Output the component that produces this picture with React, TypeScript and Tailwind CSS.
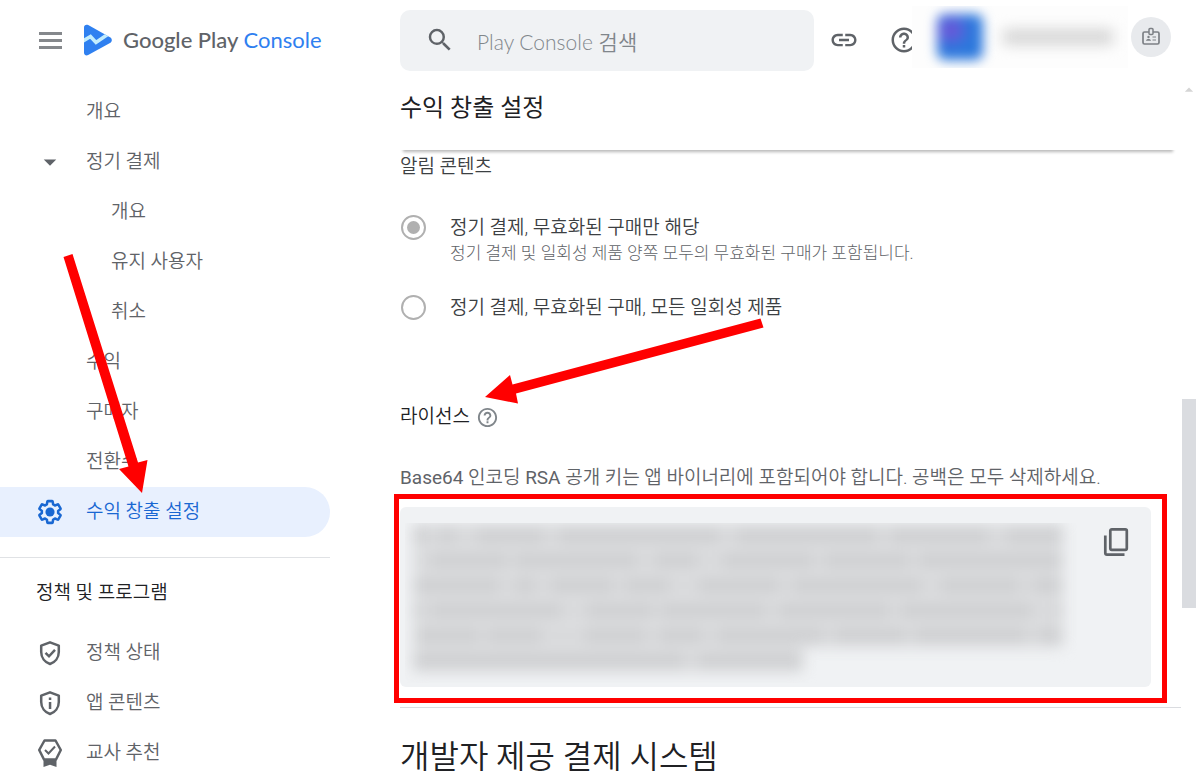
import React, { useState } from 'react';
import { MdSearch, MdLink, MdHelpOutline, MdArrowDropDown } from 'react-icons/md';

type IconProps = { className?: string };

const PlayLogo: React.FC<IconProps> = ({ className }) => (
  <svg viewBox="0 0 30 32" className={className} aria-hidden="true">
    <clipPath id="play-shape">
      <path d="M1 3.2C1 1 3.2 0 5.2 1.1L27 13.3c2.4 1.4 2.4 4.4 0 5.8L5.2 31C3.2 32 1 31 1 28.8z" />
    </clipPath>
    <g clipPath="url(#play-shape)">
      <path d="M0 0h30v32H0z" fill="#2f80f0" />
      <path d="M0 17l7.500-4.500 5.500 6L26 9.500" fill="none" stroke="#c3edfd" strokeWidth="3.600" />
    </g>
  </svg>
);

const GearIcon: React.FC<IconProps> = ({ className }) => (
  <svg viewBox="0 0 24 24" className={className} aria-hidden="true">
    <g transform="translate(12 12) scale(.87) translate(-12 -12)">
      <path
        d="M19.43 12.98c.04-.32.07-.64.07-.98s-.03-.66-.07-.98l2.110-1.650c.19-.15.24-.42.12-.64l-2-3.460a.5.5 0 0 0-.61-.22l-2.490 1c-.52-.4-1.080-.73-1.690-.98l-.38-2.650A.488.488 0 0 0 14 2h-4c-.25 0-.46.18-.49.42l-.38 2.650c-.61.25-1.170.59-1.690.98l-2.490-1a.5.5 0 0 0-.61.22l-2 3.460c-.13.22-.07.49.12.64l2.110 1.650c-.04.32-.07.65-.07.98s.03.66.07.98l-2.110 1.650c-.19.15-.24.42-.12.64l2 3.460a.5.5 0 0 0 .61.22l2.490-1c.52.4 1.080.73 1.690.98l.38 2.650c.03.24.24.42.49.42h4c.25 0 .46-.18.49-.42l.38-2.650c.61-.25 1.170-.59 1.690-.98l2.490 1a.5.5 0 0 0 .61-.22l2-3.460c.12-.22.07-.49-.12-.64z"
        fill="none"
        stroke="currentColor"
        strokeWidth="2.300"
        strokeLinejoin="round"
      />
      <circle cx="12" cy="12" r="4.200" fill="currentColor" />
    </g>
  </svg>
);

const Shield = (
  <path
    d="M15 4.300L23.800 7.600V14c0 5.600-3.700 10.200-8.800 12-5.100-1.800-8.800-6.400-8.800-12V7.600z"
    fill="none"
    stroke="currentColor"
    strokeWidth="2.500"
    strokeLinejoin="round"
  />
);

const ShieldCheckIcon: React.FC<IconProps> = ({ className }) => (
  <svg viewBox="0 0 30 30" className={className} aria-hidden="true">
    {Shield}
    <path d="M10.500 14.800l3.500 3.500 6-6.500" fill="none" stroke="currentColor" strokeWidth="2.500" />
  </svg>
);

const ShieldInfoIcon: React.FC<IconProps> = ({ className }) => (
  <svg viewBox="0 0 30 30" className={className} aria-hidden="true">
    {Shield}
    <path d="M13.800 9.500h2.500V12h-2.500zM13.800 14h2.500v7h-2.500z" fill="currentColor" />
  </svg>
);

const RibbonIcon: React.FC<IconProps> = ({ className }) => (
  <svg viewBox="0 0 30 30" className={className} aria-hidden="true">
    <path
      d="M9.500 2.500h11L25.800 12 21 21.500H9L4.200 12z"
      fill="none"
      stroke="currentColor"
      strokeWidth="2.500"
      strokeLinejoin="round"
    />
    <path d="M8.500 21h13v8L15 26.800 8.500 29z" fill="currentColor" />
    <path d="M10 12l3.500 3.500L20 8.500" fill="none" stroke="currentColor" strokeWidth="2" />
  </svg>
);

const BadgeIcon: React.FC<IconProps> = ({ className }) => (
  <svg viewBox="0 0 20 20" className={className} fill="none" stroke="currentColor" aria-hidden="true">
    <path d="M8 5H3.500A1.500 1.500 0 0 0 2 6.500v9A1.500 1.500 0 0 0 3.500 17h13a1.500 1.500 0 0 0 1.500-1.500v-9A1.500 1.500 0 0 0 16.500 5H12" strokeWidth="1.700" />
    <rect x="8" y="1.500" width="4" height="6" rx="1" strokeWidth="1.500" />
    <path d="M11.500 10H15M11.500 13H15" strokeWidth="1.200" />
    <path d="M5 13.800h5c0-1.300-1.300-1.800-2.500-1.800S5 12.500 5 13.800z" fill="currentColor" stroke="none" />
    <circle cx="7.500" cy="10" r="1.200" fill="currentColor" stroke="none" />
  </svg>
);

const CopyIcon: React.FC<IconProps> = ({ className }) => (
  <svg viewBox="0 0 26 30" className={className} fill="none" stroke="currentColor" aria-hidden="true">
    <rect x="7.300" y="2.300" width="16.500" height="20.500" rx="1.500" strokeWidth="2.700" />
    <path d="M2.300 8.500V26a1.700 1.700 0 0 0 1.700 1.700h17.500" strokeWidth="2.700" />
  </svg>
);

const mainItems = [
  { label: '개요', nested: false },
  { label: '정기 결제', nested: false, expanded: true },
  { label: '개요', nested: true },
  { label: '유지 사용자', nested: true },
  { label: '취소', nested: true },
  { label: '수익', nested: false },
  { label: '구매자', nested: false },
  { label: '전환수', nested: false },
  { label: '수익 창출 설정', nested: false, active: true },
];

const policyItems = [
  { label: '정책 상태', Icon: ShieldCheckIcon },
  { label: '앱 콘텐츠', Icon: ShieldInfoIcon },
  { label: '교사 추천', Icon: RibbonIcon },
];

const options = [
  {
    id: 'voided',
    label: '정기 결제, 무효화된 구매만 해당',
    help: '정기 결제 및 일회성 제품 양쪽 모두의 무효화된 구매가 포함됩니다.',
  },
  { id: 'all', label: '정기 결제, 무효화된 구매, 모든 일회성 제품' },
];

// Word widths of the redacted key, one array per line; negative values are gaps
const keyLines = [
  [14, -12, 16, -22, 66, -16, 160, -18, 140, -14, 96, -20, 56],
  [-18, 76, -8, 122, -18, 42, -26, 90, -12, 84, -10, 144],
  [86, -16, 20, -16, 62, -12, 44, -30, 80, -14, 128, -20, 78, -14, 30],
  [8, -10, 130, -26, 66, -8, 104, -14, 110, -12, 130, -26, 6],
  [-4, 62, -8, 54, -44, 60, -14, 44, -14, 106, -12, 70, -10, 110, -14, 24],
  [270, -16, 104],
];

const TopBar = () => (
  <header className="flex h-20 items-center">
    <div className="flex w-[400px] shrink-0 items-center pl-[35px]">
      <button type="button" aria-label="메뉴" className="flex h-[30px] w-[30px] items-center justify-center">
        <span className="flex w-[23px] flex-col gap-1">
          <span className="h-[3px] bg-[#85888c]" />
          <span className="h-[3px] bg-[#85888c]" />
          <span className="h-[3px] bg-[#85888c]" />
        </span>
      </button>
      <a href="#" className="ml-[18px] flex items-center gap-2.5 whitespace-nowrap font-['Lato','Noto_Sans_CJK_KR',sans-serif] text-[22px] leading-8">
        <PlayLogo className="h-8 w-[30px]" />
        <span className="font-medium text-[#5f6368]">
          Google Play <span className="font-normal text-[#2f80f0]">Console</span>
        </span>
      </a>
    </div>
    <label className="flex h-[61px] w-[414px] items-center rounded-[10px] bg-[#f0f2f4] pl-[25px]">
      <MdSearch className="h-[30px] w-[30px] shrink-0 text-[#5f6368]" />
      <input
        type="search"
        aria-label="Play Console 검색"
        placeholder="Play Console 검색"
        className="ml-[22px] min-w-0 flex-1 bg-transparent pt-1 font-['Lato','Noto_Sans_CJK_KR',sans-serif] text-[21px] font-[350] outline-none placeholder:text-[#80868b]"
      />
    </label>
    <button type="button" aria-label="링크 복사" className="ml-[15px] text-[#5f6368]">
      <MdLink className="h-[30px] w-[30px]" />
    </button>
    <button type="button" aria-label="도움말" className="ml-[30px] text-[#5f6368]">
      <MdHelpOutline className="h-[30px] w-[30px]" />
    </button>
    <button
      type="button"
      aria-label="계정"
      className="relative -ml-[7px] mb-1.5 flex h-[62px] w-[216px] items-center overflow-hidden bg-[#fdfdfd] pl-[25px]"
    >
      <span className="h-[46px] w-[46px] shrink-0 rounded-lg bg-radial-[at_30%_35%] from-[#7b4fd8] to-[#2c78dc] to-45% blur-[6px]" />
      <span className="ml-5 h-4 w-[110px] bg-[#d6d6d6] blur-[7px]" />
    </button>
    <button
      type="button"
      aria-label="개발자 프로필"
      className="mb-1.5 ml-[3px] flex h-10 w-10 shrink-0 items-center justify-center rounded-full bg-[#e8eaed] text-[#7c8085]"
    >
      <BadgeIcon className="h-5 w-5" />
    </button>
  </header>
);

const Sidebar = () => (
  <nav className="w-[330px] shrink-0 pt-[7px] text-[19px] font-[350] text-[#5f6368]">
    <ul>
      {mainItems.map((item, index) => (
        <li key={index}>
          <a
            href="#"
            aria-current={item.active ? 'page' : undefined}
            className={`flex h-[50px] items-center ${
              item.active ? 'rounded-r-full bg-[#e8f0fe] text-[#1967d2]' : ''
            }`}
          >
            <span className="flex w-[86px] justify-center pl-3.5">
              {item.expanded && <MdArrowDropDown className="h-[30px] w-[30px]" />}
              {item.active && <GearIcon className="h-[30px] w-[30px]" />}
            </span>
            <span className={item.nested ? 'pl-[25px]' : ''}>{item.label}</span>
          </a>
        </li>
      ))}
    </ul>
    <h2 className="mt-5 border-t border-[#e0e2e5] pb-5 pl-9 pt-5 text-[19px] font-[350] leading-[30px] text-[#202124]">
      정책 및 프로그램
    </h2>
    <ul>
      {policyItems.map(({ label, Icon }) => (
        <li key={label}>
          <a href="#" className="flex h-[50px] items-center">
            <span className="flex w-[86px] justify-center pl-3.5">
              <Icon className="h-[30px] w-[30px]" />
            </span>
            <span>{label}</span>
          </a>
        </li>
      ))}
    </ul>
  </nav>
);

const LicenseKey = () => (
  <div className="relative mr-[30px] mt-3.5 flex h-[180px] items-start justify-between rounded-md bg-[#f0f2f4] pl-[5px] pr-[22px] pt-4">
    <div aria-hidden="true" className="h-[160px] w-[680px] overflow-hidden">
      <div className="flex flex-col items-start pl-2 blur-[7px]">
        {keyLines.map((line, row) => (
          <div key={row} className="flex h-[25px] bg-[#dfe0e2] py-1">
            {line.map((w, i) => (
              <span key={i} className={w > 0 ? 'bg-[#cfd0d2]' : 'bg-[#d8d9db]'} style={{ width: Math.abs(w) }} />
            ))}
          </div>
        ))}
      </div>
    </div>
    <button type="button" aria-label="라이선스 키 복사" className="mt-1 text-[#5f6368]">
      <CopyIcon className="h-[30px] w-[26px]" />
    </button>
    <div className="pointer-events-none absolute -bottom-4 -left-1.5 -right-4 -top-[13px] border-[5px] border-[#ff0000]" />
  </div>
);

const Settings = () => {
  const [selected, setSelected] = useState('voided');

  return (
    <main className="ml-[70px] min-w-0 flex-1">
      <h1 className="mr-[5px] h-[70px] pt-2 text-2xl leading-10 text-[#202124] shadow-[0_5px_3px_-3px_rgba(0,0,0,0.28)]">
        수익 창출 설정
      </h1>

      <fieldset className="pt-0.5">
        <legend className="pt-0.5 text-[19px] font-[350] leading-[30px] text-[#3c4043]">알림 콘텐츠</legend>
        <div className="mt-[30px] flex flex-col gap-[30px]">
          {options.map((option) => (
            <label key={option.id} className="flex items-start">
              <input
                type="radio"
                name="notifications"
                checked={selected === option.id}
                onChange={() => setSelected(option.id)}
                className="ml-px mt-px h-[25px] w-[25px] shrink-0 appearance-none rounded-full border-2 border-[#b0b0b0] bg-clip-content p-1 checked:bg-[#b0b0b0]"
              />
              <span className="ml-6 flex flex-col">
                <span className="text-[19px] font-[350] leading-7 text-[#3c4043]">{option.label}</span>
                {option.help && <span className="text-[17px] font-light leading-[22px] text-[#5f6368]">{option.help}</span>}
              </span>
            </label>
          ))}
        </div>
      </fieldset>

      <section className="mt-20">
        <h2 className="flex items-center gap-1.5 text-[19px] font-[350] leading-[30px] text-[#202124]">
          라이선스
          <MdHelpOutline className="h-[23px] w-[23px] text-[#80868b]" />
        </h2>
        <p className="mt-[31px] whitespace-nowrap text-[19px] font-[350] leading-[30px] text-[#5f6368]">
          <span className="font-normal">Base64</span> 인코딩 <span className="font-normal">RSA</span> 공개 키는 앱
          바이너리에 포함되어야 합니다. 공백은 모두 삭제하세요.
        </p>
        <LicenseKey />
      </section>

      <h2 className="mt-5 border-t border-[#dadce0] pt-[25px] text-[32px] font-[350] leading-[48px] text-[#202124]">
        개발자 제공 결제 시스템
      </h2>
    </main>
  );
};

// Red pointers drawn over the page
const Arrows = () => (
  <svg
    width="800"
    height="520"
    viewBox="0 0 800 520"
    className="pointer-events-none absolute left-0 top-0"
    fill="#ff0000"
    aria-hidden="true"
  >
    <path d="M63.500 257l9-3 65.500 208.500 9.500-2.500-5.500 33-23-24 9.500-2.500z" />
    <path d="M760.500 318.500l3 9-247.500 66 2 10-33-6.500 25-22 2.500 9.500z" />
  </svg>
);

const App: React.FC = () => {
  return (
    <div className="relative h-screen overflow-hidden bg-white font-['Roboto','Noto_Sans_CJK_KR',sans-serif]">
      <TopBar />
      <div className="flex">
        <Sidebar />
        <Settings />
        {/* Scrollbar */}
        <div aria-hidden="true" className="flex w-4 shrink-0 flex-col items-center">
          <MdArrowDropDown className="h-5 w-5 rotate-180 text-[#d5d5d5]" />
          <div className="mt-[299px] h-[209px] w-3.5 bg-[#dadce0]" />
        </div>
      </div>
      <Arrows />
    </div>
  );
};

export default App;
